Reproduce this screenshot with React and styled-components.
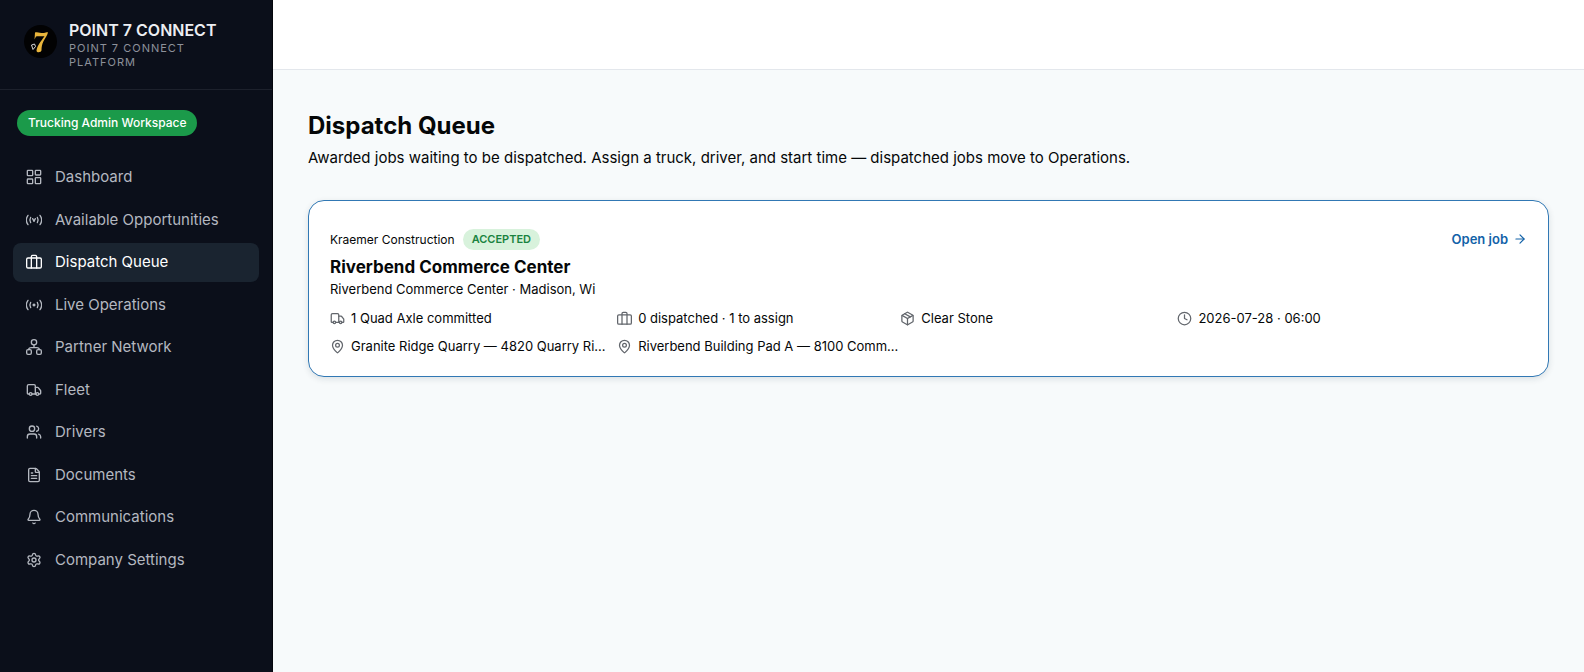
import React from "react";
import styled, { createGlobalStyle } from "styled-components";
import {
  ArrowRight,
  Bell,
  Clock,
  FileText,
  MapPin,
  Package,
  Settings,
  Truck,
  Users,
} from "lucide-react";

const GlobalStyle = createGlobalStyle`
  * {
    box-sizing: border-box;
  }
  body {
    margin: 0;
    font-family: Inter, "Liberation Sans", sans-serif;
    font-size: 14px;
    color: #050708;
    background: #f7fafb;
  }
  h1, h2, p, ul {
    margin: 0;
    padding: 0;
  }
  ul {
    list-style: none;
  }
`;

const Svg = ({ children }) => (
  <svg
    viewBox="0 0 24 24"
    fill="none"
    stroke="currentColor"
    strokeWidth="2"
    strokeLinecap="round"
    strokeLinejoin="round"
    aria-hidden="true"
  >
    {children}
  </svg>
);

const GridIcon = () => (
  <Svg>
    <rect x="2" y="2" width="8" height="8" rx="1" />
    <rect x="14" y="2" width="8" height="7" rx="1" />
    <rect x="2" y="15" width="8" height="7" rx="1" />
    <rect x="14" y="13" width="8" height="9" rx="1" />
  </Svg>
);

const SuitcaseIcon = () => (
  <Svg>
    <rect x="1" y="6" width="22" height="15" rx="2" />
    <path d="M8 21V4a2 2 0 0 1 2-2h4a2 2 0 0 1 2 2v17" />
  </Svg>
);

const SignalIcon = () => (
  <Svg>
    <path d="M3 5a12 12 0 0 0 0 14M21 5a12 12 0 0 1 0 14" />
    <path d="M7 8a8 8 0 0 0 0 8M17 8a8 8 0 0 1 0 8" />
    <path d="m10 10 2 4 2-4" />
  </Svg>
);

const LiveIcon = () => (
  <Svg>
    <path d="M3 5a12 12 0 0 0 0 14M21 5a12 12 0 0 1 0 14" />
    <path d="M7 8a8 8 0 0 0 0 8M17 8a8 8 0 0 1 0 8" />
    <circle cx="12" cy="12" r="2" fill="currentColor" stroke="none" />
    <path d="M12 10v4M10 12h4" strokeWidth="1" />
  </Svg>
);

const NetworkIcon = () => (
  <Svg>
    <circle cx="12" cy="5" r="4" />
    <path d="M12 9v4M4 16c0-2 2-3 4-3h8c2 0 4 1 4 3" />
    <rect x="1" y="16" width="7" height="7" rx="2" />
    <rect x="16" y="16" width="7" height="7" rx="2" />
  </Svg>
);

const navItems = [
  { icon: GridIcon, title: "Dashboard" },
  { icon: SignalIcon, title: "Available Opportunities" },
  { icon: SuitcaseIcon, title: "Dispatch Queue", active: true },
  { icon: LiveIcon, title: "Live Operations" },
  { icon: NetworkIcon, title: "Partner Network" },
  { icon: Truck, title: "Fleet" },
  { icon: Users, title: "Drivers" },
  { icon: FileText, title: "Documents" },
  { icon: Bell, title: "Communications" },
  { icon: Settings, title: "Company Settings" },
];

const details = [
  { icon: Truck, text: "1 Quad Axle committed" },
  { icon: SuitcaseIcon, text: "0 dispatched · 1 to assign" },
  { icon: Package, text: "Clear Stone" },
  { icon: Clock, text: "2026-07-28 · 06:00" },
  { icon: MapPin, text: "Granite Ridge Quarry — 4820 Quarry Ri..." },
  { icon: MapPin, text: "Riverbend Building Pad A — 8100 Comm..." },
];

const Layout = styled.div`
  display: flex;
  min-height: 100vh;
`;

const Sidebar = styled.aside`
  flex: 0 0 273px;
  color: #b4b8c0;
  background: #0b0f1a;
  border-right: 1px solid #05070d;
`;

const Brand = styled.div`
  display: flex;
  align-items: flex-start;
  gap: 12px;
  padding: 20px 24px;
  border-bottom: 1px solid #1d212c;
  svg {
    flex: none;
    width: 33px;
    height: 33px;
    margin-top: 5px;
  }
`;

const BrandName = styled.div`
  font-size: 16px;
  line-height: 20px;
  font-weight: 600;
  color: #eceef2;
  white-space: nowrap;
`;

const BrandSub = styled.div`
  margin-top: 1px;
  font-size: 11px;
  line-height: 14px;
  letter-spacing: 1px;
  color: #8d919a;
`;

const Workspace = styled.div`
  display: inline-block;
  margin: 20px 17px 22px;
  padding: 4px 11px;
  border-radius: 13px;
  font-size: 12px;
  line-height: 18px;
  font-weight: 500;
  color: #fff;
  background: #1b9a4a;
`;

const NavList = styled.ul`
  display: flex;
  flex-direction: column;
  gap: 4px;
  padding: 0 13px;
`;

const NavLink = styled.a`
  display: flex;
  align-items: center;
  gap: 13px;
  padding: 8px 13px;
  border-radius: 8px;
  font-size: 15px;
  line-height: 1.5;
  text-decoration: none;
  color: ${({ $active }) => ($active ? "#fff" : "inherit")};
  background: ${({ $active }) => ($active ? "#1a2430" : "transparent")};
  svg {
    width: 16px;
    height: 16px;
  }
`;

const Main = styled.div`
  flex: 1;
  min-width: 0;
`;

const TopBar = styled.header`
  height: 70px;
  background: #fff;
  border-bottom: 1px solid #e3e7ec;
`;

const Content = styled.main`
  padding: 40px 35px;
`;

const Title = styled.h1`
  font-size: 24px;
  line-height: 32px;
  font-weight: 700;
`;

const Subtitle = styled.p`
  margin-top: 4px;
  font-size: 15px;
  line-height: 24px;
`;

const Card = styled.section`
  display: flex;
  align-items: flex-start;
  gap: 12px;
  margin-top: 30px;
  padding: 28px 21px 20px;
  border: 1px solid #3178b4;
  border-radius: 16px;
  background: #fff;
  box-shadow: 0 2px 6px rgba(20, 40, 60, 0.12);
`;

const Job = styled.div`
  flex: 1;
  min-width: 0;
`;

const Company = styled.div`
  display: flex;
  align-items: center;
  gap: 8px;
  font-size: 12px;
  line-height: 21px;
`;

const Badge = styled.span`
  padding: 0 9px;
  border-radius: 11px;
  font-size: 11px;
  font-weight: 600;
  color: #1a8340;
  background: #d8f2dc;
`;

const JobTitle = styled.h2`
  margin-top: 5px;
  font-size: 17px;
  line-height: 24px;
  font-weight: 700;
`;

const Place = styled.p`
  font-size: 13px;
  line-height: 20px;
`;

const Details = styled.ul`
  display: grid;
  grid-template-columns: 279fr 275fr 269fr 262fr;
  gap: 8px;
  margin-top: 9px;
`;

const Detail = styled.li`
  display: flex;
  align-items: center;
  gap: 6px;
  min-width: 0;
  font-size: 13px;
  line-height: 20px;
  white-space: nowrap;
  svg {
    flex: none;
    width: 15px;
    height: 15px;
    color: #62666c;
  }
`;

const OpenLink = styled.a`
  display: flex;
  align-items: center;
  gap: 5px;
  font-size: 13px;
  line-height: 20px;
  font-weight: 600;
  color: #1262a8;
  text-decoration: none;
  svg {
    width: 14px;
    height: 14px;
  }
`;

const Logo = () => (
  <svg viewBox="0 0 33 33" aria-hidden="true">
    <circle cx="16.5" cy="16.5" r="16.5" fill="#020203" />
    <path
      d="M11 7.5c3-1 6 1 9 .5 1.5-.3 2.5-1 4-.8-.5 3-3 6-4.5 9-1.500 3-2 6-2 9 0 2-4.500 3-5 .5.500-5 4-9 8-14.500-3 .3-6-.4-8.500.2l-1.500 3z"
      fill="#e9b53c"
    />
    <path d="m7.500 20 3-1 1 2.500-2.500 3z" fill="none" stroke="#d8d8d8" />
  </svg>
);

const App = () => {
  return (
    <Layout>
      <GlobalStyle />
      <Sidebar>
        <Brand>
          <Logo />
          <div>
            <BrandName>POINT 7 CONNECT</BrandName>
            <BrandSub>POINT 7 CONNECT PLATFORM</BrandSub>
          </div>
        </Brand>
        <Workspace>Trucking Admin Workspace</Workspace>
        <nav>
          <NavList>
            {navItems.map(({ icon: Icon, title, active }) => (
              <li key={title}>
                <NavLink href="#" $active={active}>
                  <Icon />
                  {title}
                </NavLink>
              </li>
            ))}
          </NavList>
        </nav>
      </Sidebar>
      <Main>
        <TopBar />
        <Content>
          <Title>Dispatch Queue</Title>
          <Subtitle>
            Awarded jobs waiting to be dispatched. Assign a truck, driver, and
            start time — dispatched jobs move to Operations.
          </Subtitle>
          <Card>
            <Job>
              <Company>
                Kraemer Construction <Badge>ACCEPTED</Badge>
              </Company>
              <JobTitle>Riverbend Commerce Center</JobTitle>
              <Place>Riverbend Commerce Center · Madison, Wi</Place>
              <Details>
                {details.map(({ icon: Icon, text }) => (
                  <Detail key={text}>
                    <Icon />
                    {text}
                  </Detail>
                ))}
              </Details>
            </Job>
            <OpenLink href="#">
              Open job <ArrowRight />
            </OpenLink>
          </Card>
        </Content>
      </Main>
    </Layout>
  );
};

export default App;
